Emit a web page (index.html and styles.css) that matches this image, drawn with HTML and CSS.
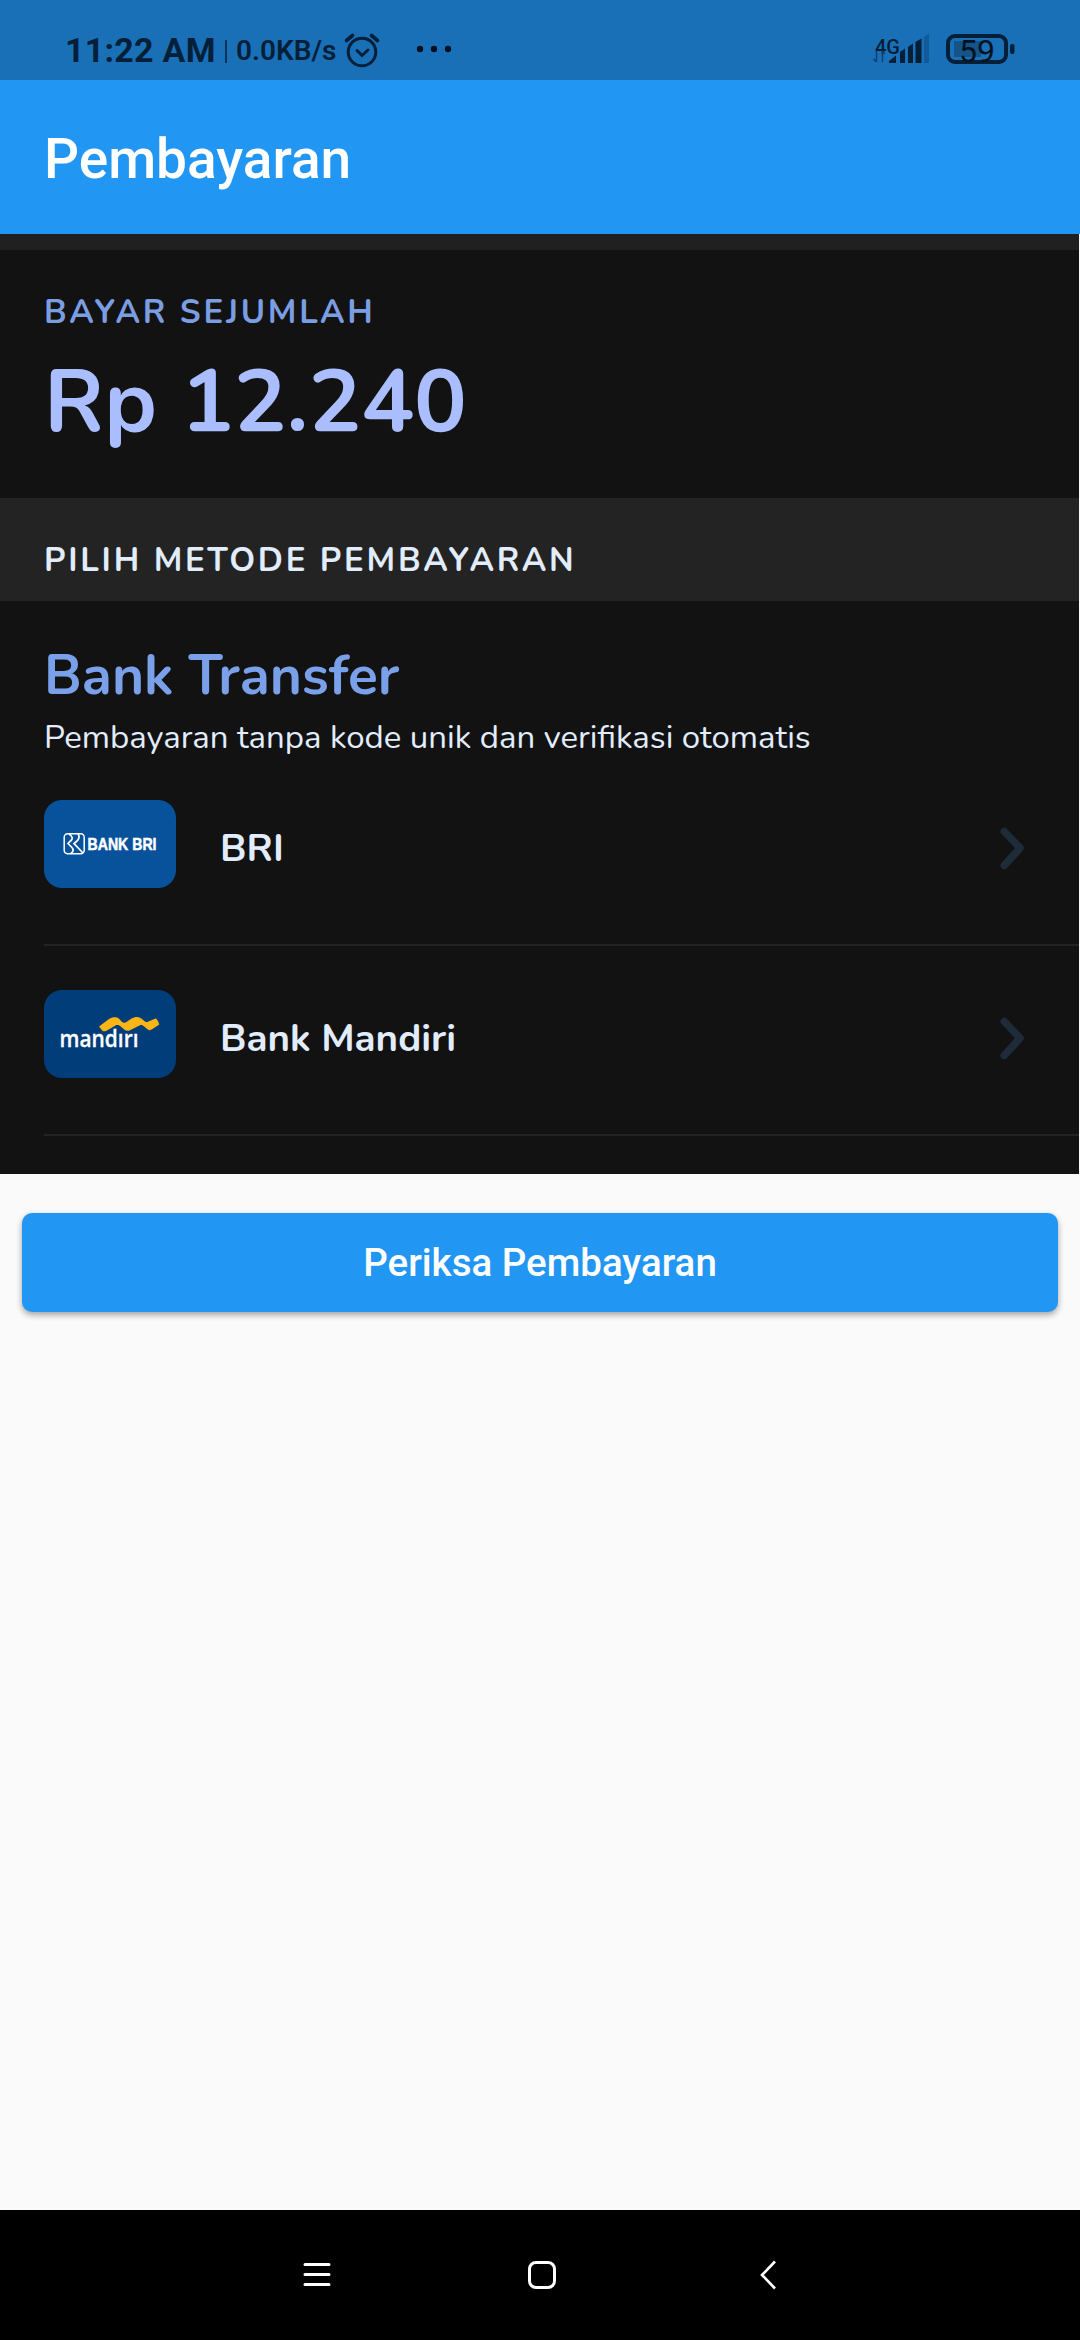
FILE: index.html
```html
<!DOCTYPE html>
<html lang="id">
<head>
<meta charset="utf-8">
<title>Pembayaran</title>
<link rel="stylesheet" href="styles.css">
</head>
<body>
<div class="screen">
  <div class="status">
    <span class="clock">11:22 AM</span>
    <span class="sep"></span>
    <span class="speed">0.0KB/s</span>
    <svg class="alarm" width="38" height="38" viewBox="0 0 38 38" fill="none" stroke="#041f38" stroke-linecap="round">
      <circle cx="19" cy="21" r="13.8" stroke-width="3"/>
      <path d="M14 19.500l5 5 6-5.500" stroke-width="3"/>
      <path d="M3.500 9.500l6-5M34.500 9.500l-6-5" stroke-width="3.600"/>
    </svg>
    <svg class="dots" width="36" height="8" viewBox="0 0 36 8" fill="#021020">
      <circle cx="4" cy="4" r="3.200"/><circle cx="18" cy="4" r="3.200"/><circle cx="32" cy="4" r="3.200"/>
    </svg>
    <svg class="signal" width="60" height="34" viewBox="0 0 60 34">
      <text class="net" x="3" y="22" textLength="25" lengthAdjust="spacingAndGlyphs">4G</text>
      <path d="M4.500 19v11M4.500 30l-3-3M10.500 30V20M10.500 19l2 3" fill="none" stroke="#0b4174" stroke-width="1.500"/>
      <path d="M17 31v-2l7-5.500v7.500zM28 31V20l5-3.500V31zM36 31V15l5-3.500V31zM43.500 31V10l6-3.500V31z" fill="#041f38"/>
      <path d="M52 31V5l5-3.500V31z" fill="#125b9a"/>
    </svg>
    <svg class="battery" width="70" height="46" viewBox="0 -6 70 46">
      <rect x="8" y="8" width="27" height="16" fill="#145489"/>
      <rect x="2" y="3" width="58" height="26" rx="7" fill="none" stroke="#041f38" stroke-width="4"/>
      <rect x="64" y="11" width="4.500" height="10" rx="2" fill="#041f38"/>
      <text class="pct" x="13" y="29" textLength="36" lengthAdjust="spacingAndGlyphs">59</text>
    </svg>
  </div>

  <header class="appbar">Pembayaran</header>

  <main class="sheet">
    <section class="amount">
      <div class="amount-label">BAYAR SEJUMLAH</div>
      <div class="amount-value">Rp 12.240</div>
    </section>
    <div class="choose">PILIH METODE PEMBAYARAN</div>
    <section class="methods">
      <h2 class="group">Bank Transfer</h2>
      <p class="note">Pembayaran tanpa kode unik dan verifikasi otomatis</p>
      <div class="row">
        <svg class="tile bri" width="132" height="88" viewBox="0 0 132 88">
          <rect x="20.200" y="33.700" width="20" height="20" rx="3.500" fill="none" stroke="#fff" stroke-width="1.500"/>
          <path d="M25 34c4 2.500 4 5 1.500 7l-2.500 2.500 3.500 3.500c2.500 2.500 2 4.500-.5 6.500M34 34c2 2.500 1.500 4.500-1 7l-3 2.500 9 9.500" fill="none" stroke="#fff" stroke-width="1.700"/>
          <text class="bri-text" x="43.500" y="50" textLength="69" lengthAdjust="spacingAndGlyphs">BANK BRI</text>
        </svg>
        <span class="name">BRI</span>
        <svg class="chev" width="32" height="48" viewBox="0 0 32 48"><path d="M9.300 7.500L25 24 9.300 41.500"/></svg>
      </div>
      <div class="row">
        <svg class="tile mandiri" width="132" height="88" viewBox="0 0 132 88">
          <text class="mandiri-text" x="15.500" y="57" textLength="79" lengthAdjust="spacingAndGlyphs">mandırı</text>
          <path d="M55 36.500L65 29C68.500 27 73 26.500 75.500 29.200L78 32C79.300 33 81 33 82.500 32L87.500 28.500C91.500 26.300 95 26.300 98 29L100.500 31.300C101.500 32.200 103 32.300 104.500 31.500L111.500 28.500C113 28.500 114 31 115.300 34.500L108.500 39C106.500 40.500 105 40.500 103.500 39.200L99.500 36C98.500 35 97 34.800 95.500 35.500L86 40.200C84 41 82 41 80.500 39.800L76.500 36.200C75 35 73 34.800 71.500 35.500L62.500 40.700C61 41.500 59.500 41.500 58.700 41Z" fill="#fdb515"/>
        </svg>
        <span class="name">Bank Mandiri</span>
        <svg class="chev" width="32" height="48" viewBox="0 0 32 48"><path d="M9.300 7.500L25 24 9.300 41.500"/></svg>
      </div>
    </section>
  </main>

  <div class="action">
    <button class="check">Periksa Pembayaran</button>
  </div>

  <nav class="nav">
    <svg width="32" height="32" viewBox="0 0 32 32" stroke="#fff" stroke-width="3" stroke-linecap="round"><path d="M4 5.500h24M4 15.500h24M4 25.500h24"/></svg>
    <svg width="32" height="32" viewBox="0 0 32 32" fill="none" stroke="#fff" stroke-width="3"><rect x="3.500" y="3.500" width="25" height="25" rx="6.500"/></svg>
    <svg width="32" height="32" viewBox="0 0 32 32" fill="none" stroke="#fff" stroke-width="2.600"><path d="M24 2.500L11 16l13 13.500"/></svg>
  </nav>
</div>
</body>
</html>
```

FILE: styles.css
```css
body {
  margin: 0;
  background: #fafafa;
}

.screen {
  display: flex;
  flex-direction: column;
  width: 1080px;
  height: 2340px;
  overflow: hidden;
  font-family: Roboto, "Liberation Sans", sans-serif;
}

.status {
  display: flex;
  align-items: flex-start;
  box-sizing: border-box;
  height: 80px;
  padding-left: 65px;
  background: #1a70b7;
  color: #041f38;
  white-space: nowrap;
}

.clock {
  width: 160px;
  margin-top: 30px;
  font-size: 34px;
  font-weight: 700;
  line-height: 40px;
  letter-spacing: 0.25px;
}

.sep {
  width: 2px;
  height: 23px;
  margin-top: 40px;
  background: #0b3358;
}

.speed {
  width: 101px;
  margin: 31px 6px 0 9px;
  font-size: 28px;
  font-weight: 600;
  line-height: 40px;
}

.alarm {
  margin-top: 31px;
}

.dots {
  margin: 45px 0 0 35px;
}

.signal {
  margin: 32px 14px 0 auto;
}

.battery {
  margin: 27px 64px 0 0;
}

.net {
  font-size: 21px;
  font-weight: 500;
  fill: #041f38;
}

.pct {
  font-size: 32px;
  fill: #04121f;
}

.appbar {
  box-sizing: border-box;
  height: 154px;
  padding: 1px 0 0 44px;
  background: #2196f3;
  color: #fff;
  font-size: 55px;
  font-weight: 500;
  line-height: 156px;
}

.sheet {
  box-sizing: border-box;
  width: 1079px;
  height: 940px;
  border-top: 16px solid #202020;
  background: #121212;
  color: #e1ecfc;
  font-family: Nunito, Lato, sans-serif;
}

.amount {
  box-sizing: border-box;
  height: 248px;
  padding: 43px 44px 0;
}

.amount-label {
  color: #7b9ee2;
  font-size: 33px;
  font-weight: 700;
  line-height: 40px;
  letter-spacing: 2.75px;
}

.amount-value {
  margin-top: 19px;
  color: #a9bdff;
  font-size: 88px;
  font-weight: 700;
  line-height: 100px;
}

.choose {
  box-sizing: border-box;
  height: 103px;
  padding: 43px 44px 0;
  background: #232323;
  font-size: 33px;
  font-weight: 700;
  line-height: 40px;
  letter-spacing: 2.75px;
}

.methods {
  padding: 43px 0 0 44px;
}

.group {
  margin: 0;
  color: #7aa0ea;
  font-size: 55px;
  font-weight: 700;
  line-height: 64px;
}

.note {
  margin: 10px 0 -2px;
  font-size: 33px;
  line-height: 40px;
}

.row {
  display: flex;
  align-items: flex-start;
  box-sizing: border-box;
  height: 190px;
  padding-top: 44px;
  border-bottom: 2px solid #232323;
}

.tile {
  border-radius: 18px;
}

.bri {
  background: #08529c;
}

.mandiri {
  background: #003d79;
}

.bri-text {
  font-family: "Liberation Sans", sans-serif;
  font-size: 17px;
  font-weight: 700;
  fill: #fff;
  stroke: #fff;
  stroke-width: 0.5px;
}

.mandiri-text {
  font-family: "Open Sans", sans-serif;
  font-size: 24px;
  font-weight: 600;
  fill: #fff;
  stroke: #fff;
  stroke-width: 0.3px;
}

.name {
  flex: 1;
  margin: 5px 0 0 44px;
  font-size: 38.5px;
  font-weight: 700;
  line-height: 88px;
}

.chev {
  margin: 24px 52px 0 0;
  fill: none;
  stroke: #1e2b38;
  stroke-width: 7.6px;
  stroke-linecap: round;
  stroke-linejoin: round;
}

.action {
  flex: 1;
  padding: 39px 22px 0;
}

.check {
  display: block;
  width: 100%;
  height: 99px;
  padding: 0;
  border: 0;
  border-radius: 10px;
  background: #2196f3;
  box-shadow: 0 3px 6px rgba(0, 0, 0, 0.35);
  color: #fff;
  font: 500 38.5px/99px Roboto, sans-serif;
}

.nav {
  display: flex;
  align-items: flex-start;
  justify-content: center;
  box-sizing: border-box;
  height: 130px;
  padding: 49px 0 0 3px;
  gap: 193px;
  background: #000;
}
```
